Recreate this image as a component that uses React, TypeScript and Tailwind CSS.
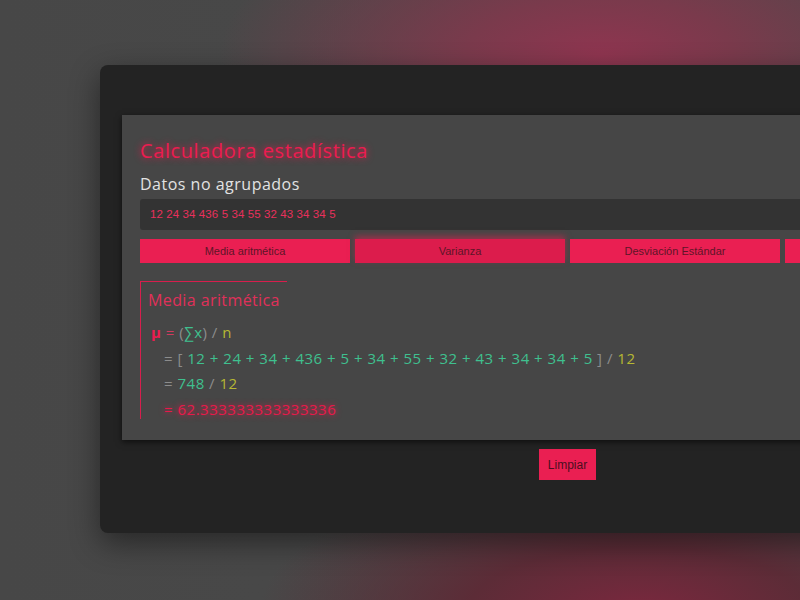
export default function App() {
  const data = [12, 24, 34, 436, 5, 34, 55, 32, 43, 34, 34, 5];
  const sum = data.reduce((a, b) => a + b, 0);
  const mean = sum / data.length;

  const tabs = ["Media aritmética", "Varianza", "Desviación Estándar", ""];

  return (
    <div className="relative h-[600px] w-[800px] overflow-hidden bg-[radial-gradient(ellipse_380px_160px_at_600px_55px,#8f3550_0%,#7a3a4c_35%,transparent_100%),radial-gradient(ellipse_380px_140px_at_640px_610px,#7a283e_0%,#5c2c37_45%,transparent_100%),linear-gradient(90deg,#474747,#4a4a4a)] pl-[100px] pt-[65px] font-['Open_Sans',sans-serif]">
      {/* outer card */}
      <div className="flex h-[468px] w-[935px] flex-col items-center rounded-[8px] bg-[#232323] shadow-[0_10px_30px_rgba(0,0,0,0.45)]">
        {/* inner panel */}
        <div className="mt-[50px] ml-[22px] h-[325px] w-[891px] self-start bg-[#464646] px-[18px] pt-[24px] shadow-[0_2px_6px_rgba(0,0,0,0.6)]">
          <h1 className="text-[20px] leading-[24px] tracking-[0.6px] text-[#ec1c50] [text-shadow:0_0_7px_#e8194a]">
            Calculadora estadística
          </h1>
          <h2 className="mt-[11px] text-[16px] leading-[20px] tracking-[0.5px] text-[#e2e2e2]">Datos no agrupados</h2>
          <div className="mt-[5px] flex h-[31px] items-center rounded-[3px] bg-[#333333] px-[10px] font-['Liberation_Sans',sans-serif] text-[11.5px] tracking-[0.1px] text-[#e8305c]">
            {data.join(" ")}
          </div>
          <div className="mt-[9px] flex gap-[5px]">
            {tabs.map((t, i) => (
              <button
                key={i}
                className={`h-[24px] w-[210px] shrink-0 font-['Liberation_Sans',sans-serif] text-[11px] text-[#5e1528] ${
                  i === 1 ? "bg-[#dc1c4c] shadow-[0_-3px_6px_rgba(233,30,79,0.5)]" : "bg-[#ea1f52]"
                }`}
              >
                {t}
              </button>
            ))}
          </div>

          {/* result */}
          <div className="mt-[18px] h-[138px] w-[147px] border-l border-t border-[#d81e4d] pl-[7px] pt-[8px] whitespace-nowrap">
            <div className="text-[16px] leading-[20px] tracking-[0.4px] text-[#e0305a]">Media aritmética</div>
            <div className="mt-[10px] pl-[3px] text-[15px] leading-[25.5px] tracking-[0.5px]">
              <div>
                <span className="font-bold text-[#ec1c50]">μ</span>
                <span className="text-[#d23a5e]"> = </span>
                <span className="text-[#8c8c8c]">(</span>
                <span className="text-[#3fc08f]">∑x</span>
                <span className="text-[#8c8c8c]">) / </span>
                <span className="text-[#b6b833]">n</span>
              </div>
              <div className="pl-[13px]">
                <span className="text-[#8c8c8c]">= [ </span>
                {data.map((d, i) => (
                  <span key={i} className="text-[#3fc08f]">
                    {d}
                    {i < data.length - 1 ? " + " : " "}
                  </span>
                ))}
                <span className="text-[#8c8c8c]">] / </span>
                <span className="text-[#b6b833]">{data.length}</span>
              </div>
              <div className="pl-[13px]">
                <span className="text-[#8c8c8c]">= </span>
                <span className="text-[#3fc08f]">{sum}</span>
                <span className="text-[#8c8c8c]"> / </span>
                <span className="text-[#b6b833]">{data.length}</span>
              </div>
              <div className="pl-[13px] text-[#e8194a] [text-shadow:0_0_6px_#e8194a]">= {mean}</div>
            </div>
          </div>
        </div>

        <button className="mt-[9px] h-[31px] w-[57px] bg-[#ea1f52] font-['Liberation_Sans',sans-serif] text-[12px] text-[#4a0f20]">
          Limpiar
        </button>
      </div>
    </div>
  );
}
